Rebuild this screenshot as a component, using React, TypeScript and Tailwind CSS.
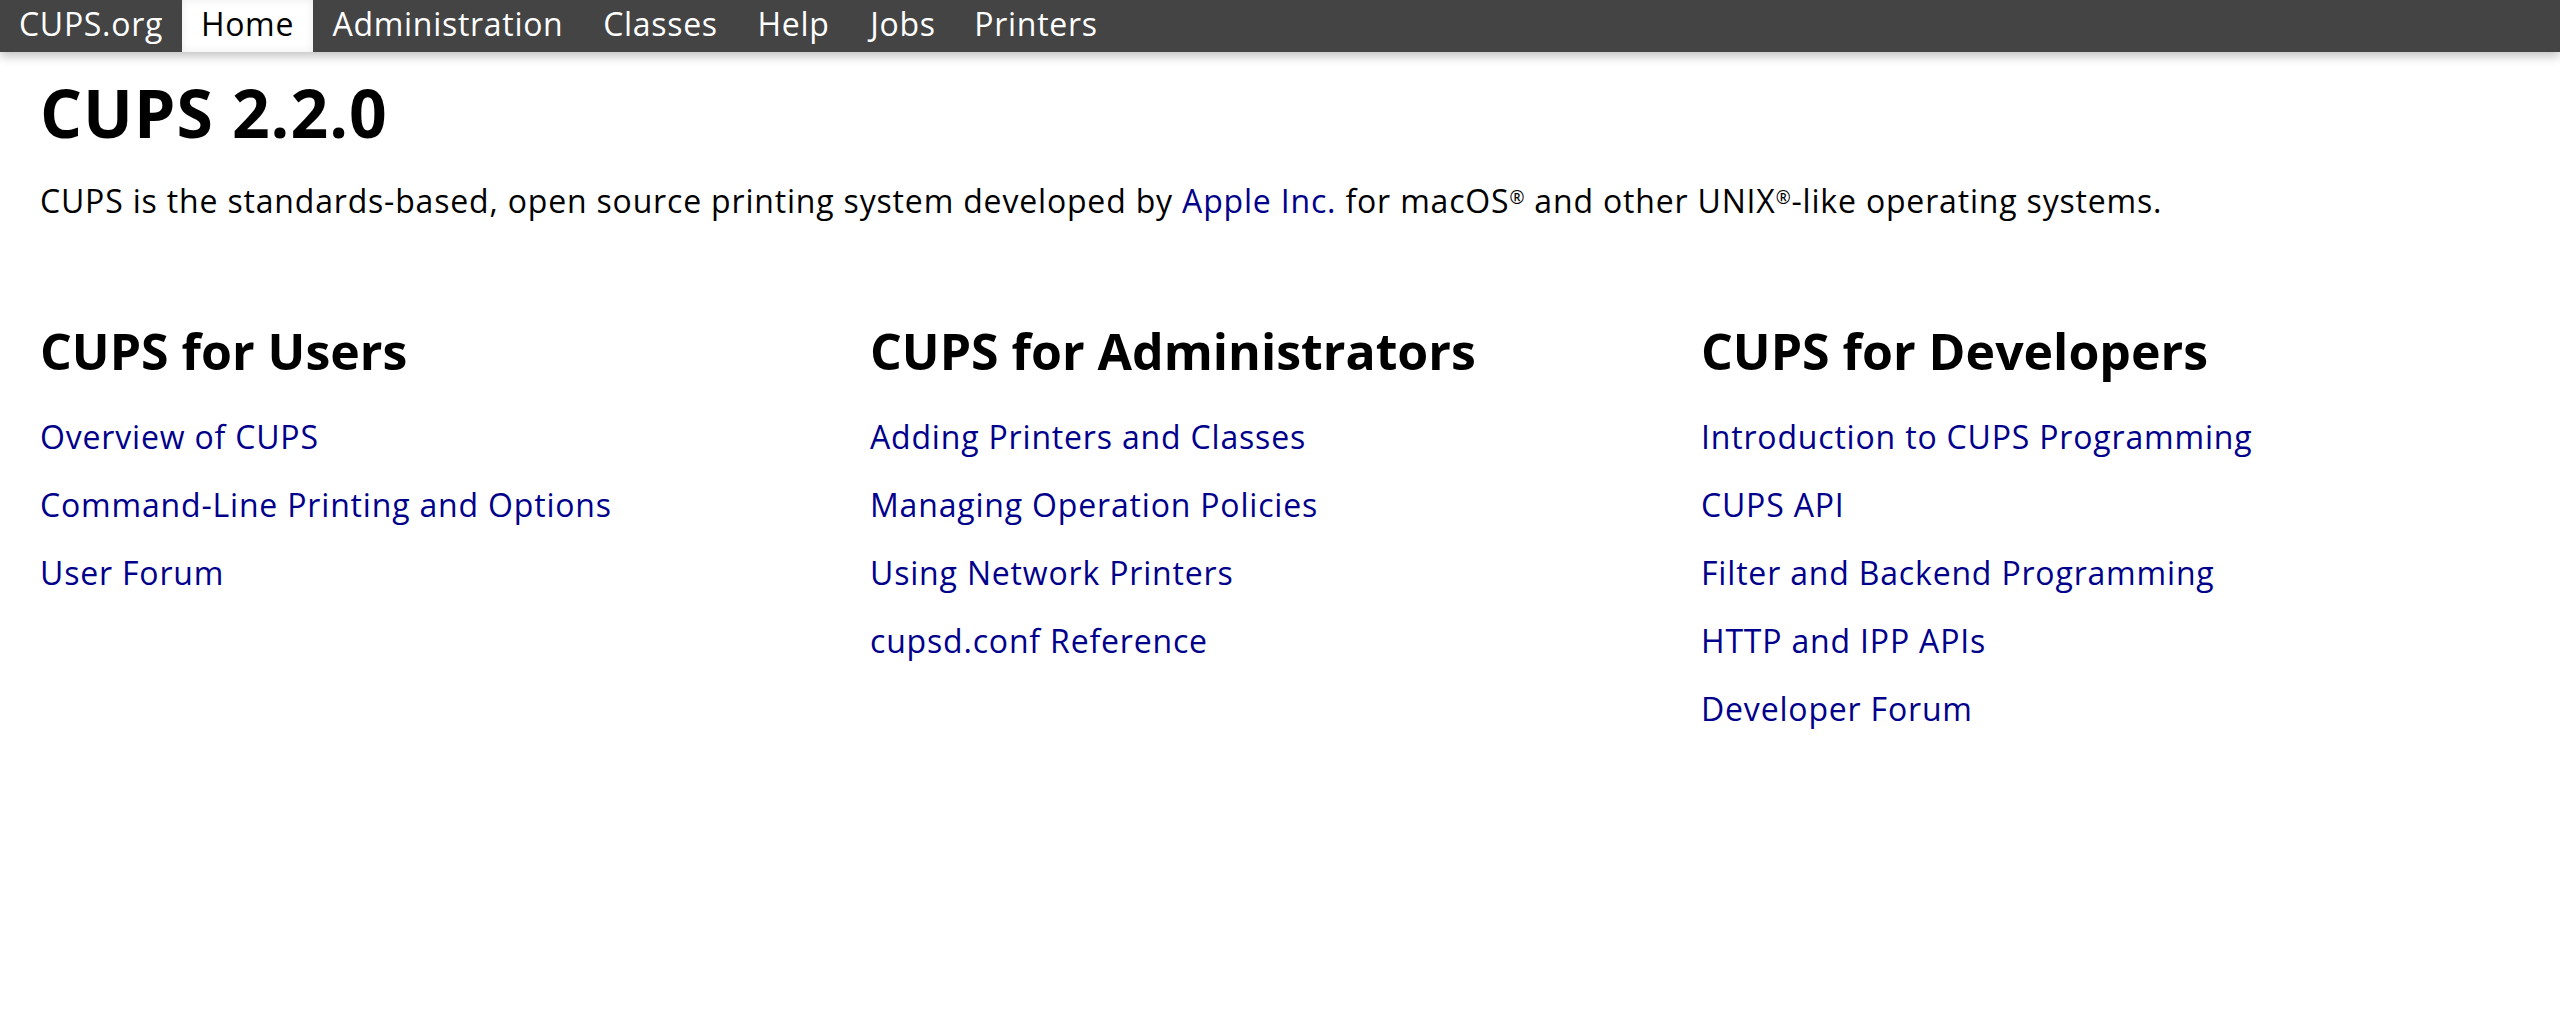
import React from "react";

const navItems: { label: string; w: string; active?: boolean }[] = [
  { label: "CUPS.org", w: "w-[182px]" },
  { label: "Home", w: "w-[131px]", active: true },
  { label: "Administration", w: "w-[270px]" },
  { label: "Classes", w: "w-[155px]" },
  { label: "Help", w: "w-[111px]" },
  { label: "Jobs", w: "w-[108px]" },
  { label: "Printers", w: "w-[158px]" },
];

const columns: { title: string; links: string[] }[] = [
  {
    title: "CUPS for Users",
    links: ["Overview of CUPS", "Command-Line Printing and Options", "User Forum"],
  },
  {
    title: "CUPS for Administrators",
    links: [
      "Adding Printers and Classes",
      "Managing Operation Policies",
      "Using Network Printers",
      "cupsd.conf Reference",
    ],
  },
  {
    title: "CUPS for Developers",
    links: [
      "Introduction to CUPS Programming",
      "CUPS API",
      "Filter and Backend Programming",
      "HTTP and IPP APIs",
      "Developer Forum",
    ],
  },
];

export default function App() {
  return (
    <div
      className="min-h-[1014px] w-full bg-white text-black"
      style={{ fontFamily: '"Open Sans", "DejaVu Sans", sans-serif' }}
    >
      <nav className="relative z-10 flex h-[52px] w-full bg-[#444444] shadow-[0_4px_10px_rgba(0,0,0,0.25)]">
        {navItems.map((item) => (
          <a
            key={item.label}
            href="#"
            className={
              item.active
                ? `${item.w} flex h-[52px] justify-center bg-white text-[32px] leading-[48px] tracking-[0.7px] text-black shadow-[inset_0_0_10px_rgba(0,0,0,0.08)]`
                : `${item.w} flex h-[52px] justify-center text-[32px] leading-[48px] tracking-[0.7px] text-white`
            }
          >
            {item.label}
          </a>
        ))}
      </nav>

      <main className="px-[40px] pt-[27px]">
        <h1 className="text-[66px] font-bold leading-[66px] tracking-[1px]">CUPS 2.2.0</h1>
        <p className="mt-[40px] text-[32px] leading-[32px] tracking-[0.82px]">
          CUPS is the standards-based, open source printing system developed by{" "}
          <a href="#" className="text-[#00008b]">
            Apple Inc.
          </a>{" "}
          for macOS<sup className="text-[18px]">®</sup> and other UNIX
          <sup className="text-[18px]">®</sup>-like operating systems.
        </p>

        <div className="mt-[109px] grid grid-cols-[830px_831px_1fr]">
          {columns.map((col) => (
            <div key={col.title} className="flex flex-col">
              <h2 className="text-[50px] font-bold leading-[50px]">{col.title}</h2>
              <ul className="mt-[27px] flex flex-col">
                {col.links.map((l) => (
                  <li key={l} className="text-[32px] leading-[68px] tracking-[0.82px]">
                    <a href="#" className="text-[#00008b]">
                      {l}
                    </a>
                  </li>
                ))}
              </ul>
            </div>
          ))}
        </div>
      </main>
    </div>
  );
}
